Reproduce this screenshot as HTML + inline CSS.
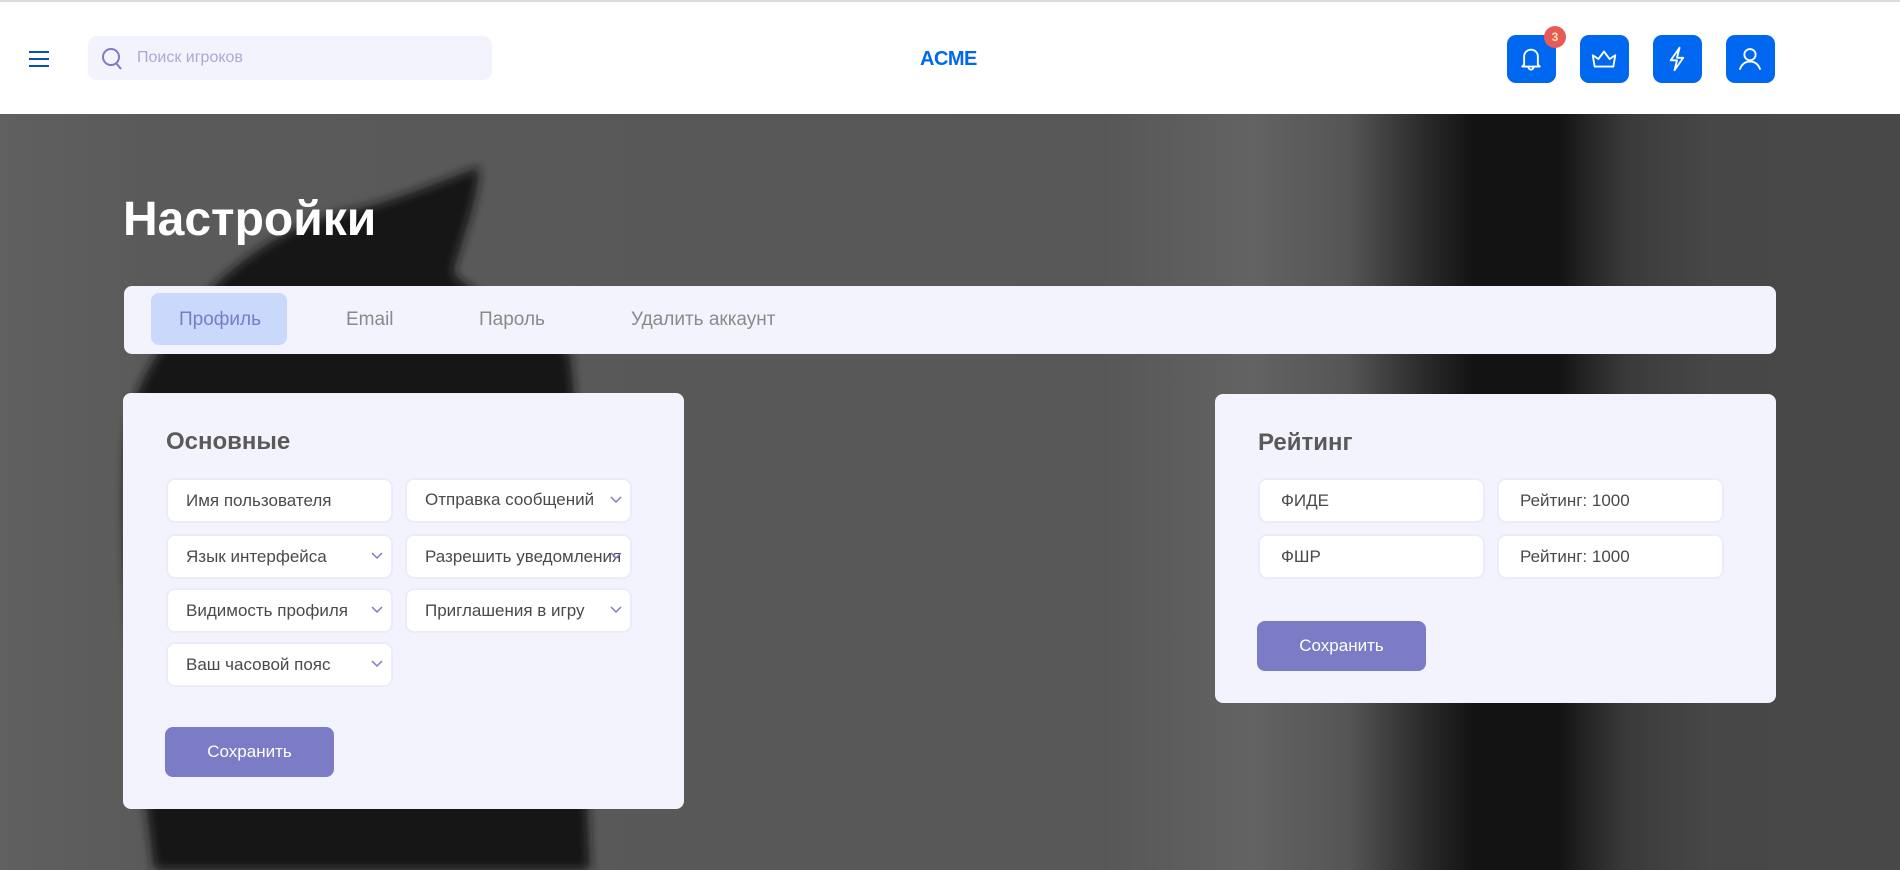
<!DOCTYPE html>
<html><head><meta charset="utf-8">
<style>
*{box-sizing:border-box;margin:0;padding:0}
body{width:1900px;height:870px;overflow:hidden;font-family:"Liberation Sans","Noto Sans CJK SC",sans-serif;background:#585858;position:relative}
.hdr{position:absolute;left:0;top:0;width:1900px;height:114px;background:#fff;border-top:2px solid #dcdcdc}
.bg{position:absolute;left:0;top:114px;width:1900px;height:756px}
.abs{position:absolute}
.card{position:absolute;background:#f3f3fe;border-radius:8px}
.f{position:absolute;width:227px;height:45px;background:#fff;border:2px solid #ebebfa;border-radius:9px;font-size:17px;color:#4a4a4a;padding-left:18px;line-height:41px;white-space:nowrap;overflow:hidden}
.f svg{position:absolute;right:8px;top:16px}
.f.s{padding-right:34px}
.btn{position:absolute;width:169px;height:50px;background:#7b7bc6;border-radius:8px;color:#fff;font-size:17px;text-align:center;line-height:50px}
h2{position:absolute;font-size:24px;color:#5a5a5a;font-weight:bold}
.ib{position:absolute;top:33px;width:49px;height:48px;background:#0068f0;border-radius:9px}
.ib svg{position:absolute;left:9px;top:9px}
.tab{position:absolute;top:309px;font-size:19px;color:#8a8a8a}
</style></head><body>
<svg class="bg" width="1900" height="756" viewBox="0 114 1900 756">
<defs>
<linearGradient id="g" x1="0" y1="0" x2="1900" y2="0" gradientUnits="userSpaceOnUse">
<stop offset="0" stop-color="#606060"/>
<stop offset="0.08" stop-color="#5a5a5a"/>
<stop offset="0.58" stop-color="#575757"/>
<stop offset="0.66" stop-color="#636363"/>
<stop offset="0.71" stop-color="#555"/>
<stop offset="0.75" stop-color="#2a2a2a"/>
<stop offset="0.775" stop-color="#131313"/>
<stop offset="0.82" stop-color="#131313"/>
<stop offset="0.855" stop-color="#3a3a3a"/>
<stop offset="0.9" stop-color="#474747"/>
<stop offset="1" stop-color="#484848"/>
</linearGradient>
<filter id="b" x="-20%" y="-20%" width="140%" height="140%"><feGaussianBlur stdDeviation="5"/></filter></defs>
<rect x="0" y="114" width="1900" height="756" fill="url(#g)"/>
<path d="M479 167 C420 190 380 205 354 210 C300 220 250 250 210 290 C160 340 130 390 127 440 C120 560 135 720 154 870 L590 870 C585 760 585 680 580 600 C575 520 578 420 570 354 C530 320 480 300 453 273 C465 230 478 200 479 167 Z" fill="#151515" filter="url(#b)"/>
</svg>
<div class="hdr">
<svg class="abs" style="left:29px;top:49px" width="20" height="16"><g stroke="#0a4fb3" stroke-width="2"><line x1="0" y1="1" x2="20" y2="1"/><line x1="0" y1="8" x2="20" y2="8"/><line x1="0" y1="15" x2="20" y2="15"/></g></svg>
<div class="abs" style="left:88px;top:34px;width:404px;height:44px;background:#f3f3fe;border-radius:9px"></div>
<svg class="abs" style="left:101px;top:45px" width="22" height="24"><circle cx="10" cy="10" r="8" fill="none" stroke="#7b7bc6" stroke-width="2"/><line x1="15" y1="16" x2="20" y2="22" stroke="#7b7bc6" stroke-width="2"/></svg>
<div class="abs" style="left:137px;top:47px;font-size:16px;color:#a9a9d8">Поиск игроков</div>
<div class="abs" style="left:920px;top:46px;font-size:20px;font-weight:bold;color:#0068f0;letter-spacing:-0.5px">ACME</div>
<div class="ib" style="left:1507px"><svg width="30" height="30" viewBox="0 0 24 24" fill="none" stroke="#fff" stroke-width="1.5" stroke-linecap="round" stroke-linejoin="round"><path d="M6.5 16.5V10a5.5 5.5 0 0 1 11 0v6.5l1.5 1.5H5z"/><path d="M10 18.5a2 2 0 0 0 4 0"/></svg></div>
<div class="abs" style="left:1544px;top:24px;width:22px;height:22px;border-radius:50%;background:#e85a56;color:#fde9b6;font-size:12px;font-weight:bold;text-align:center;line-height:22px">3</div>
<div class="ib" style="left:1580px"><svg width="30" height="30" viewBox="0 0 24 24" fill="none" stroke="#fff" stroke-width="1.5" stroke-linejoin="round"><path d="M3 9l4.5 3L12 6l4.5 6L21 9l-1.5 9h-15z"/></svg></div>
<div class="ib" style="left:1653px"><svg width="30" height="30" viewBox="0 0 24 24" fill="none" stroke="#fff" stroke-width="1.5" stroke-linejoin="round"><path d="M14 3L7 13h5l-2 8 7-10h-5z"/></svg></div>
<div class="ib" style="left:1726px"><svg width="30" height="30" viewBox="0 0 24 24" fill="none" stroke="#fff" stroke-width="1.5" stroke-linecap="round"><circle cx="12" cy="8.5" r="4.5"/><path d="M4 20c1.5-4 4.5-6 8-6s6.5 2 8 6"/></svg></div>
</div>

<div class="abs" style="left:123px;top:192px;font-size:48px;font-weight:bold;color:#fff">Настройки</div>

<div class="card" style="left:124px;top:286px;width:1652px;height:68px"></div>
<div class="abs" style="left:151px;top:293px;width:136px;height:52px;background:#c9d8fb;border-radius:8px"></div>
<div class="tab" style="left:179px;color:#7b7bc6">Профиль</div>
<div class="tab" style="left:346px">Email</div>
<div class="tab" style="left:479px">Пароль</div>
<div class="tab" style="left:631px">Удалить аккаунт</div>

<div class="card" style="left:123px;top:393px;width:561px;height:416px">
<h2 style="left:43px;top:35px">Основные</h2>
</div>
<div class="f" style="left:166px;top:478px">Имя пользователя</div>
<div class="f s" style="left:405px;top:478px;line-height:39px">Отправка сообщений<svg width="12" height="8"><path d="M1 1l5 5 5-5" fill="none" stroke="#7b7bc6" stroke-width="1.5"/></svg></div>
<div class="f s" style="left:166px;top:534px">Язык интерфейса<svg width="12" height="8"><path d="M1 1l5 5 5-5" fill="none" stroke="#7b7bc6" stroke-width="1.5"/></svg></div>
<div class="f s" style="left:405px;top:534px">Разрешить уведомления<svg width="12" height="8"><path d="M1 1l5 5 5-5" fill="none" stroke="#7b7bc6" stroke-width="1.5"/></svg></div>
<div class="f s" style="left:166px;top:588px">Видимость профиля<svg width="12" height="8"><path d="M1 1l5 5 5-5" fill="none" stroke="#7b7bc6" stroke-width="1.5"/></svg></div>
<div class="f s" style="left:405px;top:588px">Приглашения в игру<svg width="12" height="8"><path d="M1 1l5 5 5-5" fill="none" stroke="#7b7bc6" stroke-width="1.5"/></svg></div>
<div class="f s" style="left:166px;top:642px">Ваш часовой пояс<svg width="12" height="8"><path d="M1 1l5 5 5-5" fill="none" stroke="#7b7bc6" stroke-width="1.5"/></svg></div>
<div class="btn" style="left:165px;top:727px">Сохранить</div>

<div class="card" style="left:1215px;top:394px;width:561px;height:309px">
<h2 style="left:43px;top:35px">Рейтинг</h2>
</div>
<div class="f" style="left:1258px;top:478px;padding-left:21px">ФИДЕ</div>
<div class="f" style="left:1497px;top:478px;padding-left:21px">Рейтинг: 1000</div>
<div class="f" style="left:1258px;top:534px;padding-left:21px">ФШР</div>
<div class="f" style="left:1497px;top:534px;padding-left:21px">Рейтинг: 1000</div>
<div class="btn" style="left:1257px;top:621px">Сохранить</div>
</body></html>
